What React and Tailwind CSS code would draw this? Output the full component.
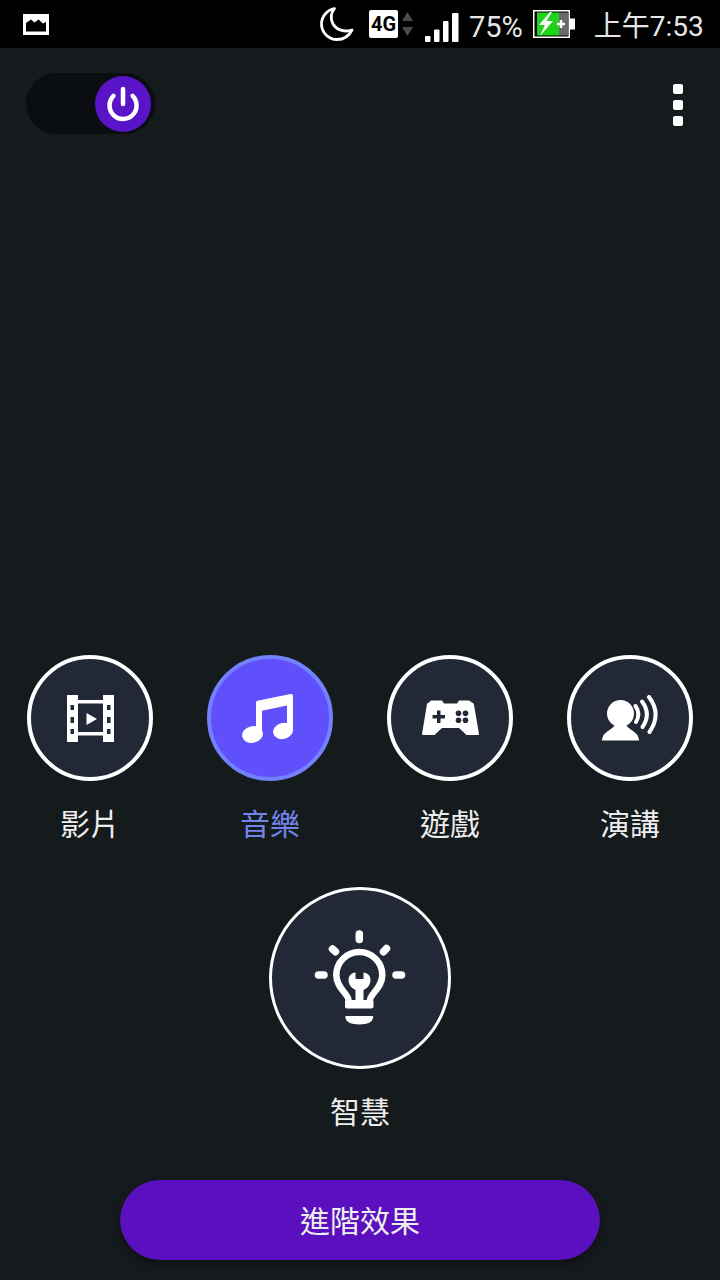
import { Power } from "lucide-react";

const sans = "font-['Roboto','Noto_Sans_CJK_TC',sans-serif]";

function ImageNote() {
  return (
    <svg width="26" height="21" viewBox="0 0 26 21">
      <path fillRule="evenodd" fill="#fff" d="M0 0H26V21H0ZM3 17.500H23V8L20 9.500L15.500 5.500L11.500 8.500L8 5.500L3 9Z" />
    </svg>
  );
}

function Moon() {
  return (
    <svg width="34" height="34" viewBox="0 0 34 34" fill="none">
      <path d="M14.500 1.500C7 3 1.500 9.500 1.500 17C1.500 25.500 8.500 32.500 17 32.500C23.500 32.500 29 29 32 23C24 25.500 16.500 23 13 17C10.500 12 11 6 14.500 1.500Z" stroke="#fff" strokeWidth="2.800" strokeLinejoin="round" />
    </svg>
  );
}

function NetArrows() {
  return (
    <svg width="11" height="24" viewBox="0 0 11 24" fill="#4a4a4a">
      <path d="M5.500 0L11 9H0Z" />
      <path d="M5.500 24L0 15H11Z" />
    </svg>
  );
}

function Signal() {
  return (
    <svg width="34" height="29" viewBox="0 0 34 29" fill="#fff">
      <rect x="0" y="23" width="5.500" height="6" rx="1" />
      <rect x="9" y="16.500" width="5.500" height="12.500" rx="1" />
      <rect x="18" y="8" width="5.500" height="21" rx="1" />
      <rect x="27" y="0" width="6.500" height="29" rx="1" />
    </svg>
  );
}

function Battery() {
  return (
    <svg width="43" height="28" viewBox="0 0 43 28">
      <rect x="0.750" y="0.750" width="35.500" height="26.500" fill="#000" stroke="#fff" strokeWidth="1.500" />
      <rect x="4" y="2.500" width="22" height="23" fill="#1fd21a" />
      <rect x="26" y="2.500" width="9" height="23" fill="#6a6a6a" />
      <rect x="37" y="8.500" width="5" height="11" fill="#fff" />
      <path d="M17 2L6 15H12L7 26L20 11H13.500L19 2Z" fill="#fff" />
      <path d="M24 14H32M28 10V18" stroke="#fff" strokeWidth="2.500" />
    </svg>
  );
}

function FilmIcon() {
  return (
    <svg width="47" height="47" viewBox="0 0 47 47" fill="#fff">
      <path fillRule="evenodd" d="M0 0H11V47H0ZM3.500 10V15H7V10ZM3.500 22V28H7V22ZM3.500 34V39H7V34Z" />
      <path fillRule="evenodd" d="M36 0H47V47H36ZM40 10V15H43.500V10ZM40 22V28H43.500V22ZM40 34V39H43.500V34Z" />
      <rect x="11" y="5" width="25" height="3.500" />
      <rect x="11" y="37" width="25" height="3.500" />
      <path d="M19.500 18L30 24L19.500 30Z" />
    </svg>
  );
}

function MusicIcon() {
  return (
    <svg className="mr-[6px]" width="51" height="50" viewBox="0 0 51 50" fill="#fff">
      <path d="M14 9.500Q14 8 15.500 7.700L48.500 1Q51 .6 51 3V38H45V12.500L20 17.700V42H14Z" />
      <ellipse cx="10.500" cy="41.500" rx="10.500" ry="8.300" transform="rotate(-14 10.500 41.500)" />
      <ellipse cx="41" cy="38" rx="10" ry="8" transform="rotate(-14 41 38)" />
    </svg>
  );
}

function GameIcon() {
  return (
    <svg width="57" height="36" viewBox="0 0 57 36">
      <path fill="#fff" d="M5 4Q5 3 7 2.500L9 0.500H20L22 3.500H35L37 0.500H47L50 2.500Q52 3 52 5L57 34Q57 35 56 35H44.500L37 28H20L12.500 35H1Q0 35 0 34Z" />
      <path d="M15 10.500H18.500V15H23V18.500H18.500V23H15V18.500H10.500V15H15Z" fill="#222835" />
      <circle cx="36.500" cy="13.300" r="2.800" fill="#222835" />
      <circle cx="43.500" cy="13.300" r="2.800" fill="#222835" />
      <circle cx="36.500" cy="20.300" r="2.800" fill="#222835" />
      <circle cx="43.500" cy="20.300" r="2.800" fill="#222835" />
    </svg>
  );
}

function SpeechIcon() {
  return (
    <svg width="56" height="46" viewBox="0 0 56 46" fill="none">
      <circle cx="18.500" cy="18.500" r="13.500" fill="#fff" />
      <path fill="#fff" d="M0 45.500C0 37 9 36 13 30L24 30C28 36 37 37 37 45.500Z" />
      <path d="M33.500 11Q39 19 34 27" stroke="#fff" strokeWidth="4" strokeLinecap="round" />
      <path d="M40 6.500Q49.500 19 40.500 32" stroke="#fff" strokeWidth="4" strokeLinecap="round" />
      <path d="M47 2Q60 19 47.500 37" stroke="#fff" strokeWidth="4" strokeLinecap="round" />
    </svg>
  );
}

function BulbIcon() {
  return (
    <svg width="92" height="96" viewBox="0 0 92 96" fill="none">
      <g stroke="#fff" strokeWidth="7.500" strokeLinecap="round">
        <path d="M45.300 4V9.500" />
        <path d="M18.500 19L21.500 21.800" />
        <path d="M72.500 18.500L69.500 21.800" />
        <path d="M4.500 45H10" />
        <path d="M82 45H87.500" />
      </g>
      <path d="M34.500 72V70C34.500 64 22.300 58 22.300 45A23 23 0 0 1 68.300 45C68.300 58 56 64 56 70V72" stroke="#fff" strokeWidth="6.500" />
      <rect x="31" y="70" width="28.500" height="8.500" rx="2" fill="#fff" />
      <path fill="#fff" d="M34.500 50Q34.500 45 39 43L41.500 42.500V49H49.500V42.500L52 43Q56.500 45 56.500 50Q56.500 57 49.500 60V72H41.500V60Q34.500 57 34.500 50Z" />
      <path fill="#fff" d="M32.500 86H58Q59.500 86 59.300 87.500Q58 94.500 45.300 94.500Q32.500 94.500 31.300 87.500Q31 86 32.500 86Z" />
    </svg>
  );
}

function Mode({ label, active, children }) {
  return (
    <div className="flex flex-col items-center">
      <div className={`flex h-[126px] w-[126px] items-center justify-center rounded-full border-[4px] ${active ? "border-[#7282ff] bg-[#5f50fb]" : "border-white bg-[#222835]"}`}>
        {children}
      </div>
      <span className={`mt-[25px] text-[30px] leading-[38px] ${active ? "text-[#7384ea]" : "text-[#eeeeee]"}`}>{label}</span>
    </div>
  );
}

export default function App() {
  return (
    <div className={`flex h-[1280px] w-[720px] flex-col overflow-hidden bg-[#151a1d] ${sans}`}>
      {/* Status bar */}
      <div className="flex h-12 items-center bg-black pl-[23px] text-[#e6e6e6]">
        <ImageNote />
        <div className="ml-[271px]"><Moon /></div>
        <div className="ml-[15px] flex h-[28px] w-[29px] items-center justify-center rounded-[2px] bg-white text-[20px] font-bold text-black">4G</div>
        <div className="ml-[4px]"><NetArrows /></div>
        <div className="ml-[12px] mt-[7px]"><Signal /></div>
        <span className="ml-[10px] mt-[6px] text-[29px] leading-none">75%</span>
        <div className="ml-[10px]"><Battery /></div>
        <span className="ml-[18px] mt-[6px] text-[28px] leading-none">上午7:53</span>
      </div>

      {/* Top controls */}
      <div className="flex items-start justify-between pl-[26px] pr-[37px] pt-[25px]">
        <div className="flex h-[61px] w-[129px] items-center justify-end rounded-full bg-[#0a0e10] pr-[4px]">
          <div className="flex h-[56px] w-[56px] items-center justify-center rounded-full bg-[#5a14c8]">
            <Power size={36} strokeWidth={3} color="#fff" />
          </div>
        </div>
        <div className="mt-[11px] flex flex-col gap-[6px]">
          <div className="h-[10px] w-[10px] rounded-[2px] bg-white" />
          <div className="h-[10px] w-[10px] rounded-[2px] bg-white" />
          <div className="h-[10px] w-[10px] rounded-[2px] bg-white" />
        </div>
      </div>

      <div className="flex-1" />

      {/* Sound modes */}
      <div className="grid grid-cols-4">
        <Mode label="影片"><FilmIcon /></Mode>
        <Mode label="音樂" active><MusicIcon /></Mode>
        <Mode label="遊戲"><GameIcon /></Mode>
        <Mode label="演講"><SpeechIcon /></Mode>
      </div>

      <div className="mt-[43px] flex flex-col items-center">
        <div className="flex h-[182px] w-[182px] items-center justify-center rounded-full border-[3px] border-white bg-[#222835]">
          <BulbIcon />
        </div>
        <span className="mt-[25px] text-[30px] leading-[38px] text-[#eeeeee]">智慧</span>
      </div>

      <button className="mx-auto mb-[20px] mt-[48px] h-[80px] w-[480px] rounded-full bg-[#5a10bf] pt-[3px] text-[30px] text-[#eeeeee] shadow-[0_4px_8px_rgba(0,0,0,0.35)]">
        進階效果
      </button>
    </div>
  );
}
